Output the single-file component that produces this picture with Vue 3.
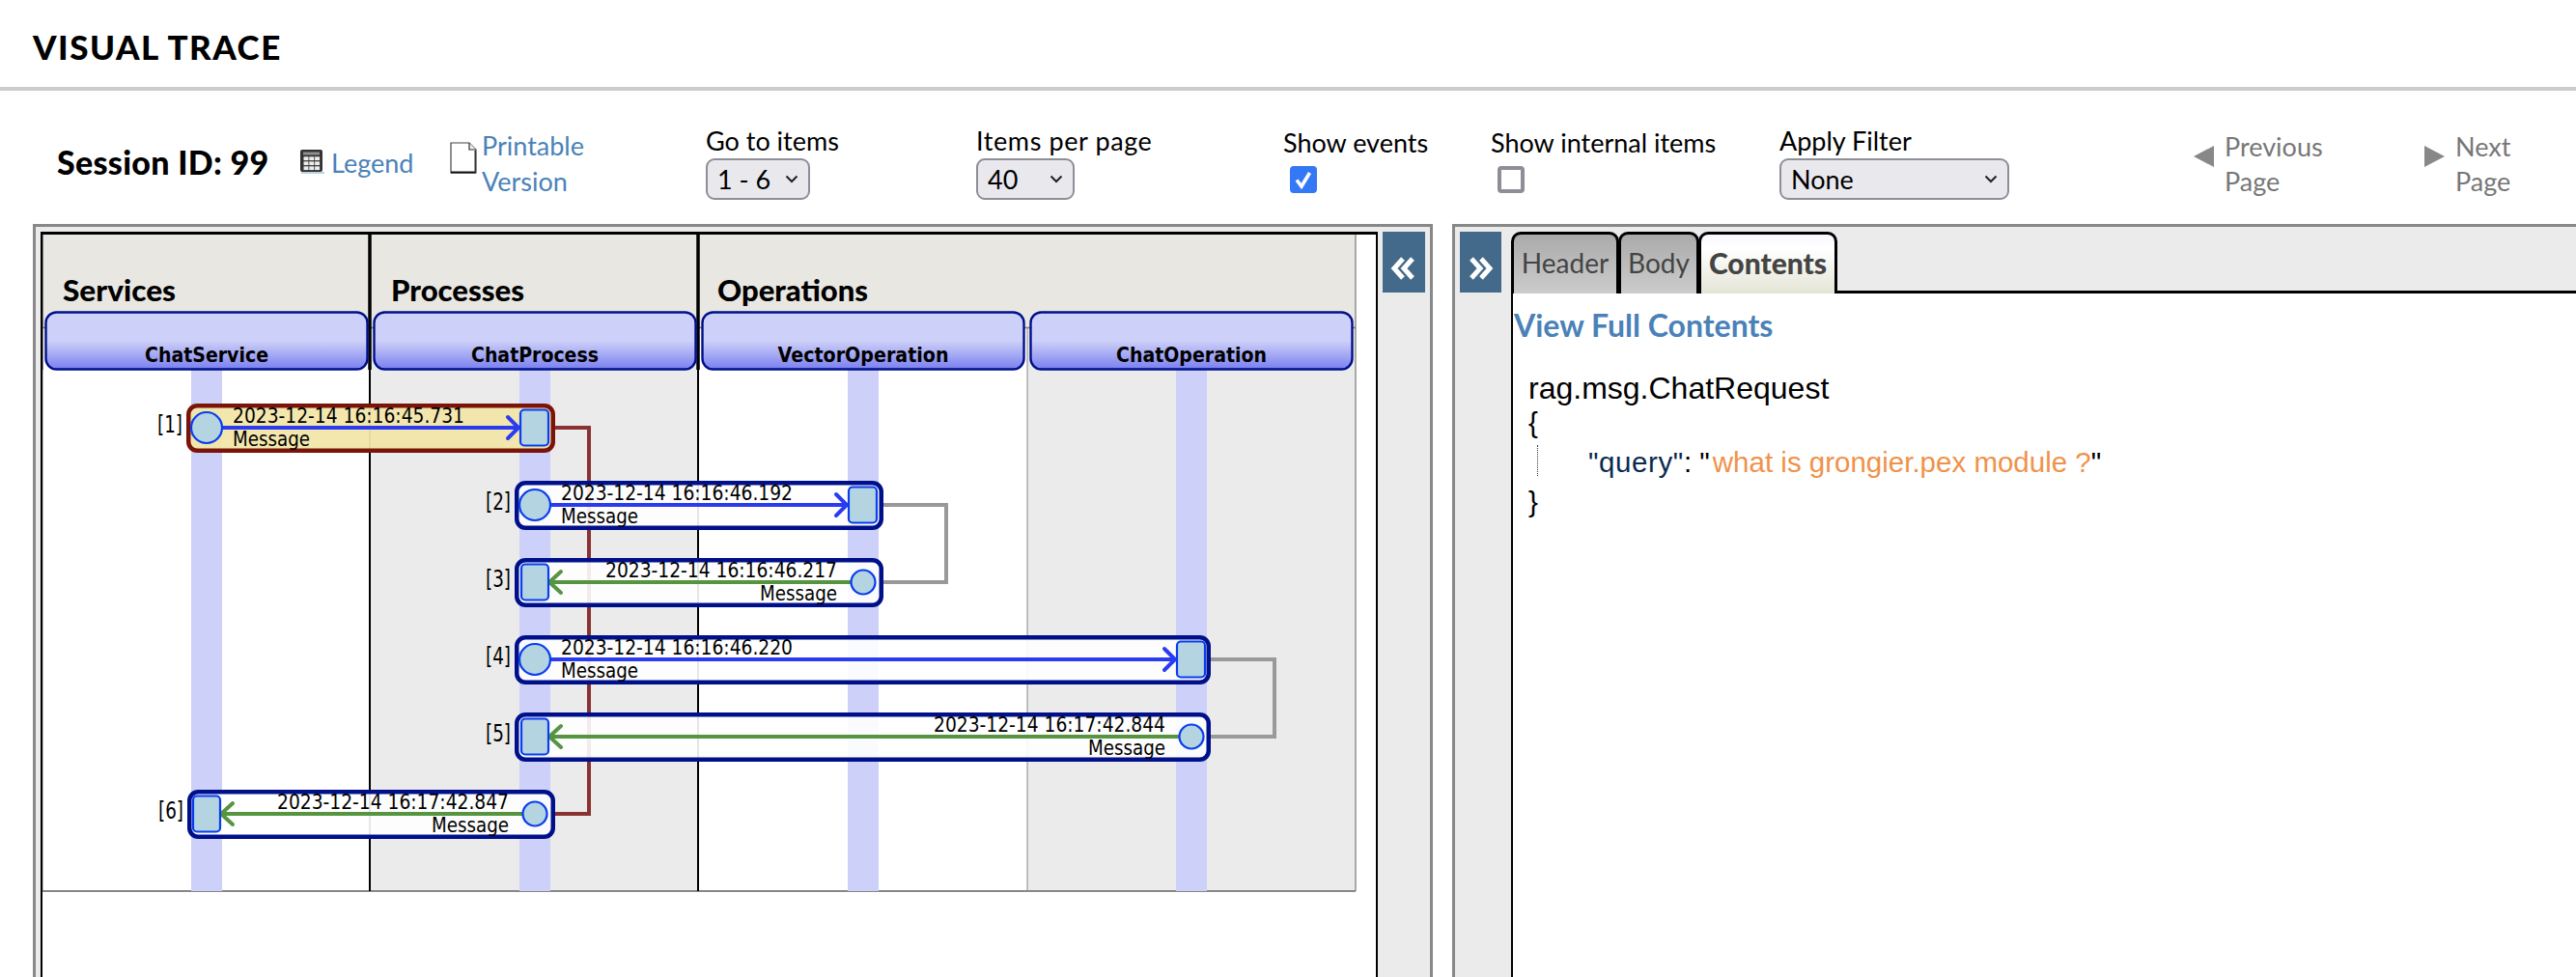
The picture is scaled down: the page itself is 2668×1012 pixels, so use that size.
<template>
  <div class="page">
    <h1 class="title">VISUAL TRACE</h1>

    <div class="toolbar">
      <div class="session">Session ID: 99</div>
      <a class="link legend">
        <svg width="26" height="26" viewBox="0 0 26 26">
          <rect x="1" y="1" width="23" height="23" rx="2" fill="#333" />
          <rect x="2" y="24" width="24" height="2" fill="#bcd3e2" />
          <rect x="4" y="3.5" width="17" height="3" fill="#8f8f8f" />
          <rect v-for="c in cells" :key="c.k" :x="c.x" :y="c.y" width="5" height="3.8" fill="#ededed" />
        </svg>
        <span>Legend</span>
      </a>
      <a class="link printable">
        <svg width="28" height="33" viewBox="0 0 28 33">
          <path d="M1 1H20L27 8V32H1Z" fill="#fff" stroke="#444" stroke-width="1.2" />
          <path d="M1 30.5H27V32.5H1Z" fill="#111" />
          <path d="M25.5 9H27V32H25.5Z" fill="#333" />
          <path d="M20 1V8H27" fill="#eee" stroke="#333" stroke-width="1.2" />
        </svg>
        <span>Printable<br />Version</span>
      </a>

      <div class="field goto">
        <label>Go to items</label>
        <select class="sel" style="width: 108px"><option>1 - 6</option></select>
      </div>
      <div class="field perpage">
        <label>Items per page</label>
        <select class="sel" style="width: 102px"><option>40</option></select>
      </div>
      <div class="field events">
        <label>Show events</label>
        <input type="checkbox" class="check" checked />
      </div>
      <div class="field internal">
        <label>Show internal items</label>
        <input type="checkbox" class="check" />
      </div>
      <div class="field filter">
        <label>Apply Filter</label>
        <select class="sel" style="width: 238px"><option>None</option></select>
      </div>

      <div class="pager prev">
        <span class="tri-left"></span>
        <span>Previous<br />Page</span>
      </div>
      <div class="pager next">
        <span class="tri-right"></span>
        <span>Next<br />Page</span>
      </div>
    </div>

    <div class="panels">
      <div class="panel left">
        <div class="trace">
          <svg class="diagram" width="1381" height="770" viewBox="43 242 1381 770">
            <defs>
              <linearGradient id="head" x1="0" y1="0" x2="0" y2="1">
                <stop offset="0" stop-color="#cdd0f8" />
                <stop offset="0.5" stop-color="#cdd0f8" />
                <stop offset="1" stop-color="#7a80f0" />
              </linearGradient>
            </defs>

            <!-- column backgrounds -->
            <rect x="383" y="338" width="340" height="584" fill="#ebebeb" />
            <rect x="1064" y="338" width="340" height="584" fill="#ebebeb" />
            <rect x="43" y="242" width="1361" height="96" fill="#e8e7e2" />
            <line x1="43" y1="338.5" x2="1404" y2="338.5" stroke="#777" stroke-width="1.5" />
            <line x1="43" y1="922" x2="1404" y2="922" stroke="#888" stroke-width="2" />
            <line x1="44" y1="242" x2="44" y2="382" stroke="#555" stroke-width="1.5" />
            <line x1="44" y1="382" x2="44" y2="922" stroke="#888" stroke-width="1" />
            <line x1="383" y1="242" x2="383" y2="382" stroke="#000" stroke-width="3.5" />
            <line x1="383" y1="382" x2="383" y2="922" stroke="#000" stroke-width="2" />
            <line x1="723" y1="242" x2="723" y2="382" stroke="#000" stroke-width="3.5" />
            <line x1="723" y1="382" x2="723" y2="922" stroke="#000" stroke-width="2" />
            <line x1="1064" y1="338" x2="1064" y2="922" stroke="#888" stroke-width="1" />
            <line x1="1404" y1="242" x2="1404" y2="922" stroke="#777" stroke-width="1.2" />

            <text v-for="g in groups" :key="g.name" class="group" :x="g.x" y="311" :textLength="g.w" lengthAdjust="spacingAndGlyphs">{{ g.name }}</text>

            <!-- lifelines and their headers -->
            <rect v-for="l in lanes" :key="l.name + 'l'" :x="l.cx - 16" y="382" width="32" height="540" fill="#cdd0f8" />
            <g v-for="l in lanes" :key="l.name">
              <rect :x="l.cx - 166.5" y="322.5" width="333" height="59" rx="11" fill="url(#head)" stroke="#00108a" stroke-width="2.4" />
              <text class="lane" :x="l.cx" y="374" text-anchor="middle" :textLength="l.w" lengthAdjust="spacingAndGlyphs">{{ l.name }}</text>
            </g>

            <!-- connectors between calls -->
            <path d="M575 442H610V842H575" fill="none" stroke="#8a3232" stroke-width="4" />
            <path d="M915 522H980V602H915" fill="none" stroke="#999" stroke-width="4" />
            <path d="M1254 682H1320V762H1254" fill="none" stroke="#999" stroke-width="4" />

            <!-- messages -->
            <g v-for="m in messages" :key="m.n">
              <text class="msg label" :x="m.x1 - 4 - 26" :y="m.y + 30" textLength="26" lengthAdjust="spacingAndGlyphs">[{{ m.n }}]</text>
              <rect
                :x="m.x1 + 2.25"
                :y="m.y + 2.25"
                :width="m.x2 - m.x1 - 4.5"
                height="46.5"
                rx="9"
                :fill="m.first ? 'rgba(242,230,170,0.95)' : 'rgba(255,255,255,0.9)'"
                :stroke="m.first ? '#7a1408' : '#00108a'"
                stroke-width="4.5" />
              <template v-if="m.dir === 'call'">
                <line :x1="m.from" :y1="m.y + 25" :x2="m.to - 15" :y2="m.y + 25" stroke="#2b3cf0" stroke-width="4" />
                <path :d="`M${m.to - 28} ${m.y + 14}L${m.to - 17} ${m.y + 25}L${m.to - 28} ${m.y + 36}`" fill="none" stroke="#2b3cf0" stroke-width="4" stroke-linecap="round" />
                <circle :cx="m.from" :cy="m.y + 25" r="16" fill="#b3d4e0" stroke="#0a3cf0" stroke-width="2.2" />
                <rect :x="m.to - 15" :y="m.y + 6.5" width="29" height="37" rx="4" fill="#b3d4e0" stroke="#0a3cf0" stroke-width="2.2" />
                <text class="msg" :x="m.from + 27" :y="m.y + 20" textLength="240" lengthAdjust="spacingAndGlyphs">{{ m.time }}</text>
                <text class="msg" :x="m.from + 27" :y="m.y + 44" textLength="80" lengthAdjust="spacingAndGlyphs">Message</text>
              </template>
              <template v-else>
                <line :x1="m.from" :y1="m.y + 25" :x2="m.to + 14" :y2="m.y + 25" stroke="#559540" stroke-width="4" />
                <path :d="`M${m.to + 27} ${m.y + 14}L${m.to + 15} ${m.y + 25}L${m.to + 27} ${m.y + 36}`" fill="none" stroke="#559540" stroke-width="4" stroke-linecap="round" />
                <circle :cx="m.from" :cy="m.y + 25" r="12.5" fill="#b3d4e0" stroke="#0a3cf0" stroke-width="2.2" />
                <rect :x="m.to - 14" :y="m.y + 6.5" width="28" height="37" rx="4" fill="#b3d4e0" stroke="#0a3cf0" stroke-width="2.2" />
                <text class="msg" :x="m.from - 267" :y="m.y + 20" textLength="240" lengthAdjust="spacingAndGlyphs">{{ m.time }}</text>
                <text class="msg" :x="m.from - 107" :y="m.y + 44" textLength="80" lengthAdjust="spacingAndGlyphs">Message</text>
              </template>
            </g>
          </svg>
        </div>
        <button class="toggle collapse">
          <svg width="44" height="63" viewBox="0 0 44 63"><path d="M21 28L12 38L21 48M31 28L22 38L31 48" fill="none" stroke="#fff" stroke-width="5" /></svg>
        </button>
      </div>

      <div class="panel right">
        <button class="toggle expand">
          <svg width="43" height="63" viewBox="0 0 43 63"><path d="M12 28L21 38L12 48M22 28L31 38L22 48" fill="none" stroke="#fff" stroke-width="5" /></svg>
        </button>
        <div class="detail">
          <div class="tabs">
            <div class="tab" style="width: 112px">Header</div>
            <div class="tab" style="width: 84px">Body</div>
            <div class="tab active" style="width: 144px">Contents</div>
          </div>
          <div class="content">
            <a class="full">View Full Contents</a>
            <div class="tree">
              <div class="cls">rag.msg.ChatRequest</div>
              <div>{</div>
              <div class="prop">
                <span class="key">"query"</span>: "<span class="str">what is grongier.pex module ?</span>"
              </div>
              <div>}</div>
            </div>
          </div>
        </div>
      </div>
    </div>
  </div>
</template>

<script setup>
const cells = [];
for (let r = 0; r < 3; r++) {
  for (let c = 0; c < 3; c++) {
    cells.push({ k: r + '-' + c, x: 4.5 + c * 5.8, y: 8.3 + r * 5 });
  }
}

const groups = [
  { name: 'Services', x: 65, w: 117 },
  { name: 'Processes', x: 405, w: 138 },
  { name: 'Operations', x: 743, w: 156 },
];

const lanes = [
  { name: 'ChatService', cx: 214, w: 128 },
  { name: 'ChatProcess', cx: 554, w: 132 },
  { name: 'VectorOperation', cx: 894, w: 177 },
  { name: 'ChatOperation', cx: 1234, w: 156 },
];

const messages = [
  { n: 1, y: 417, x1: 193, x2: 575, from: 214, to: 554, dir: 'call', time: '2023-12-14 16:16:45.731', first: true },
  { n: 2, y: 497, x1: 533, x2: 915, from: 554, to: 894, dir: 'call', time: '2023-12-14 16:16:46.192' },
  { n: 3, y: 577, x1: 533, x2: 915, from: 894, to: 554, dir: 'back', time: '2023-12-14 16:16:46.217' },
  { n: 4, y: 657, x1: 533, x2: 1254, from: 554, to: 1234, dir: 'call', time: '2023-12-14 16:16:46.220' },
  { n: 5, y: 737, x1: 533, x2: 1254, from: 1234, to: 554, dir: 'back', time: '2023-12-14 16:17:42.844' },
  { n: 6, y: 817, x1: 194, x2: 575, from: 554, to: 214, dir: 'back', time: '2023-12-14 16:17:42.847' },
];
</script>

<style>
html,
body {
  margin: 0;
  background: #fff;
  overflow: hidden;
}
</style>

<style scoped>
.page {
  width: 2668px;
  height: 1012px;
  overflow: hidden;
  font-family: Lato, "Noto Sans", sans-serif;
  color: #000;
}
.title {
  margin: 0;
  height: 94px;
  padding: 27px 0 0 34px;
  box-sizing: border-box;
  font-size: 35px;
  line-height: 42px;
  font-weight: 900;
  letter-spacing: 1.5px;
  border-bottom: 4px solid #ccc;
}
.toolbar {
  height: 138px;
  display: flex;
}
.session {
  margin: 54px 0 0 59px;
  width: 251px;
  font-size: 34px;
  line-height: 40px;
  font-weight: 900;
  letter-spacing: 0.3px;
}
.link {
  color: #4a82b8;
  font-size: 27px;
  display: flex;
}
.legend {
  width: 156px;
  margin-top: 55px;
  gap: 7px;
  height: 39px;
  line-height: 39px;
}
.legend svg {
  margin-top: 5px;
}
.printable {
  width: 265px;
  margin-top: 38px;
  height: 80px;
  gap: 5px;
  line-height: 37px;
}
.printable svg {
  margin-top: 15px;
}
.field {
  display: flex;
  flex-direction: column;
  align-items: flex-start;
  margin-top: 36px;
}
.field label {
  font-size: 27px;
  line-height: 32px;
  height: 34px;
  white-space: nowrap;
}
.goto {
  width: 280px;
}
.perpage {
  width: 318px;
}
.perpage label {
  letter-spacing: 0.6px;
}
.events {
  width: 215px;
  margin-top: 38px;
}
.internal {
  width: 299px;
  margin-top: 38px;
}
.filter {
  width: 429px;
}
.sel {
  height: 43px;
  box-sizing: border-box;
  border: 2.5px solid #8e8e99;
  border-radius: 9px;
  background: #e9e9ed;
  font-family: inherit;
  font-size: 27px;
  color: #000;
  padding: 0 0 0 10px;
  appearance: none;
  background-image: url("data:image/svg+xml,%3Csvg xmlns='http://www.w3.org/2000/svg' width='14' height='9'%3E%3Cpath d='M1.5 1.5L7 7L12.5 1.5' fill='none' stroke='%23222' stroke-width='2'/%3E%3C/svg%3E");
  background-repeat: no-repeat;
  background-position: right 10px center;
}
.check {
  appearance: none;
  margin: 6px 0 0 7px;
  width: 28px;
  height: 28px;
  box-sizing: border-box;
  border: 4px solid #8e8e99;
  border-radius: 4px;
  background: #fff;
}
.check:checked {
  border: 0;
  background: #3478f6 url("data:image/svg+xml,%3Csvg xmlns='http://www.w3.org/2000/svg' width='28' height='28'%3E%3Cpath d='M7 14.5L12 21L20.5 7' fill='none' stroke='%23fff' stroke-width='3.6'/%3E%3C/svg%3E");
}
.pager {
  display: flex;
  align-items: flex-start;
  color: #777;
  font-size: 27px;
  line-height: 36px;
  margin-top: 40px;
  gap: 11px;
}
.prev {
  width: 239px;
}
.tri-left,
.tri-right {
  margin-top: 17px;
  width: 0;
  height: 0;
  border-top: 11px solid transparent;
  border-bottom: 11px solid transparent;
}
.tri-left {
  border-right: 21px solid #888;
}
.tri-right {
  border-left: 21px solid #888;
}
.panels {
  display: flex;
  gap: 20px;
  padding-left: 34px;
  height: 780px;
}
.panel {
  box-sizing: border-box;
  border: solid #888;
  border-width: 3px 3px 0;
  background: #ebebeb;
  padding-top: 5px;
  display: flex;
  height: 780px;
}
.left {
  width: 1450px;
  padding-left: 5px;
}
.right {
  flex: 1;
  padding-left: 5px;
  border-right: 0;
}
.trace {
  width: 1385px;
  box-sizing: border-box;
  border: solid #000;
  border-width: 3px 2px 0;
  background: #fff;
  flex: none;
  overflow: hidden;
}
.diagram {
  display: block;
  margin-left: -1px;
}
.toggle {
  flex: none;
  width: 44px;
  height: 63px;
  padding: 0;
  border: 0;
  background: #436a8a;
  display: block;
}
.toggle svg {
  display: block;
}
.collapse {
  margin-left: 5px;
}
.expand {
  width: 43px;
}
.detail {
  flex: 1;
  margin-left: 10px;
  display: flex;
  flex-direction: column;
}
.tabs {
  display: flex;
  height: 64px;
  border-bottom: 3px solid #000;
  box-sizing: border-box;
}
.tab {
  box-sizing: border-box;
  height: 64px;
  border: 3px solid #000;
  border-bottom: 0;
  border-radius: 10px 10px 0 0;
  background: linear-gradient(#aaa, #ccc);
  color: #444;
  font-size: 28px;
  line-height: 58px;
  text-align: center;
  margin-right: -1px;
}
.tab.active {
  background: linear-gradient(#f8f8ff, #fff 25%, #e4e4d6);
  font-weight: 900;
  font-size: 30px;
}
.content {
  flex: 1;
  background: #fff;
  border-left: 2px solid #000;
}
.full {
  display: block;
  margin-top: 12px;
  padding-left: 1px;
  color: #4a82b8;
  font-size: 32px;
  line-height: 42px;
  font-weight: 700;
}
.tree {
  margin: 29px 0 0 16px;
  font-family: "Liberation Sans", Arial, sans-serif;
  font-size: 29.5px;
  line-height: 41px;
}
.cls {
  font-size: 32px;
  line-height: 30px;
}
.prop {
  position: relative;
  padding-left: 62px;
}
.prop::before {
  content: "";
  position: absolute;
  left: 9px;
  top: 3px;
  height: 32px;
  border-left: 1px dotted #333;
}
.key {
  color: #0a2a50;
  letter-spacing: 0.6px;
}
.str {
  color: #f0924a;
  margin-left: 3px;
}
.group {
  font-family: Lato, sans-serif;
  font-weight: 900;
  font-size: 30px;
}
.lane {
  font-family: "DejaVu Sans", sans-serif;
  font-weight: 700;
  font-size: 22px;
}
.msg {
  font-family: "DejaVu Sans", sans-serif;
  font-size: 22px;
}
.label {
  font-size: 24px;
}
</style>
